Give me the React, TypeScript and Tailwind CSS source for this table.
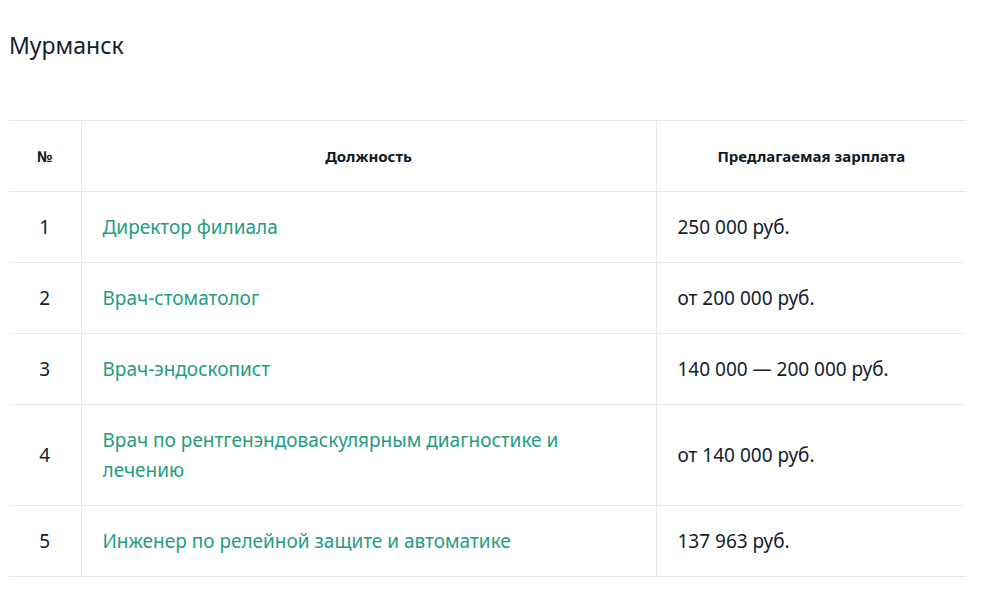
const rows = [
  { n: 1, title: <>Директор филиала</>, pay: "250 000 руб." },
  { n: 2, title: <>Врач-стоматолог</>, pay: "от 200 000 руб." },
  { n: 3, title: <>Врач-эндоскопист</>, pay: "140 000 — 200 000 руб." },
  {
    n: 4,
    title: (
      <>
        Врач по рентгенэндоваскулярным диагностике и<br />
        лечению
      </>
    ),
    pay: "от 140 000 руб.",
  },
  { n: 5, title: <>Инженер по релейной защите и автоматике</>, pay: "137 963 руб." },
];

export default function App() {
  return (
    <main
      className="min-h-screen bg-white px-[9px] pt-[29px] text-[#13212b]"
      style={{ fontFamily: '"Noto Sans", "Open Sans", sans-serif' }}
    >
      <h2 className="text-[23px] leading-[32px] font-normal">Мурманск</h2>

      <table className="mt-[59px] w-[957px] border-collapse table-fixed">
        <colgroup>
          <col className="w-[72px]" />
          <col className="w-[575px]" />
          <col className="w-[310px]" />
        </colgroup>
        <thead>
          <tr className="h-[71px] border-y border-[#e8e9ec] text-[15px] font-bold text-[#0c1a24]">
            <th className="text-center">№</th>
            <th className="border-l border-[#e8e9ec] text-center">Должность</th>
            <th className="border-l border-[#e8e9ec] text-center">Предлагаемая зарплата</th>
          </tr>
        </thead>
        <tbody className="text-[19px] leading-[30px]">
          {rows.map((r) => (
            <tr key={r.n} className="border-b border-[#e8e9ec]">
              <td className="py-[20px] text-center">{r.n}</td>
              <td className="border-l border-[#e8e9ec] px-[21px] py-[20px] text-[#1f9c81]">
                {r.title}
              </td>
              <td className="border-l border-[#e8e9ec] px-[21px] py-[20px]">{r.pay}</td>
            </tr>
          ))}
        </tbody>
      </table>
    </main>
  );
}
